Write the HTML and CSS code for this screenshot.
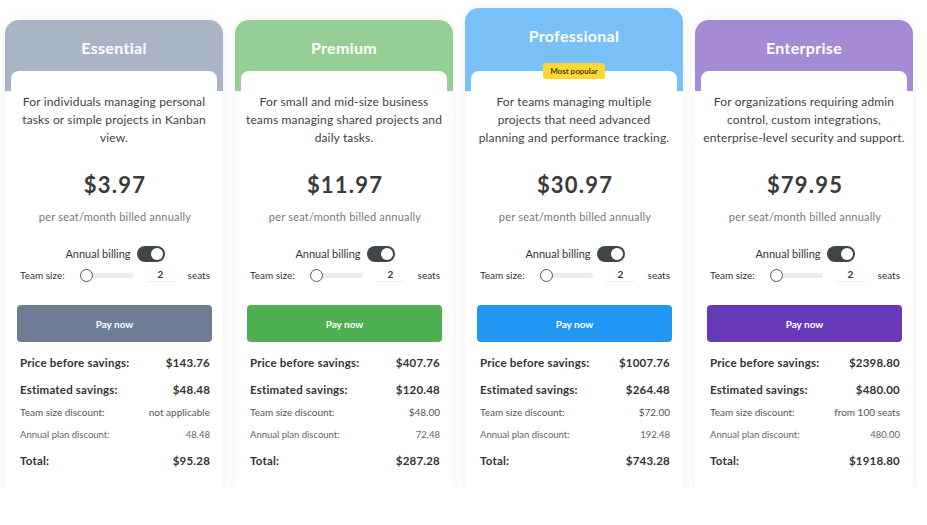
FILE: index.html
```html
<!DOCTYPE html>
<html lang="en">
<head>
<meta charset="utf-8">
<title>Pricing</title>
<link rel="stylesheet" href="styles.css">
</head>
<body>
<main class="pricing">
  <section class="plan plan--essential">
    <header class="plan-head">
      <h2 class="plan-name">Essential</h2>
      <div class="plan-tab"></div>
    </header>
    <div class="plan-body">
      <p class="plan-desc">For individuals managing personal tasks or simple projects in Kanban view.</p>
      <div class="plan-price">$3.97</div>
      <div class="plan-unit">per seat/month billed annually</div>
      <div class="billing">Annual billing <span class="toggle"><span class="knob"></span></span></div>
      <div class="team">
        <span class="team-label">Team size:</span>
        <span class="slider"><span class="thumb"></span></span>
        <span class="seat-input">2</span>
        <span class="team-unit">seats</span>
      </div>
      <button class="pay">Pay now</button>
      <div class="summary">
        <div class="row row--major"><span>Price before savings:</span><span>$143.76</span></div>
        <div class="row row--major"><span>Estimated savings:</span><span>$48.48</span></div>
        <div class="row row--minor"><span>Team size discount:</span><span>not applicable</span></div>
        <div class="row row--minor row--annual"><span>Annual plan discount:</span><span>48.48</span></div>
        <div class="row row--major row--total"><span>Total:</span><span>$95.28</span></div>
      </div>
    </div>
  </section>

  <section class="plan plan--premium">
    <header class="plan-head">
      <h2 class="plan-name">Premium</h2>
      <div class="plan-tab"></div>
    </header>
    <div class="plan-body">
      <p class="plan-desc">For small and mid-size business teams managing shared projects and daily tasks.</p>
      <div class="plan-price">$11.97</div>
      <div class="plan-unit">per seat/month billed annually</div>
      <div class="billing">Annual billing <span class="toggle"><span class="knob"></span></span></div>
      <div class="team">
        <span class="team-label">Team size:</span>
        <span class="slider"><span class="thumb"></span></span>
        <span class="seat-input">2</span>
        <span class="team-unit">seats</span>
      </div>
      <button class="pay">Pay now</button>
      <div class="summary">
        <div class="row row--major"><span>Price before savings:</span><span>$407.76</span></div>
        <div class="row row--major"><span>Estimated savings:</span><span>$120.48</span></div>
        <div class="row row--minor"><span>Team size discount:</span><span>$48.00</span></div>
        <div class="row row--minor row--annual"><span>Annual plan discount:</span><span>72.48</span></div>
        <div class="row row--major row--total"><span>Total:</span><span>$287.28</span></div>
      </div>
    </div>
  </section>

  <section class="plan plan--professional plan--featured">
    <header class="plan-head">
      <h2 class="plan-name">Professional</h2>
      <div class="plan-tab"><span class="badge">Most popular</span></div>
    </header>
    <div class="plan-body">
      <p class="plan-desc">For teams managing multiple<br>projects that need advanced<br>planning and performance tracking.</p>
      <div class="plan-price">$30.97</div>
      <div class="plan-unit">per seat/month billed annually</div>
      <div class="billing">Annual billing <span class="toggle"><span class="knob"></span></span></div>
      <div class="team">
        <span class="team-label">Team size:</span>
        <span class="slider"><span class="thumb"></span></span>
        <span class="seat-input">2</span>
        <span class="team-unit">seats</span>
      </div>
      <button class="pay">Pay now</button>
      <div class="summary">
        <div class="row row--major"><span>Price before savings:</span><span>$1007.76</span></div>
        <div class="row row--major"><span>Estimated savings:</span><span>$264.48</span></div>
        <div class="row row--minor"><span>Team size discount:</span><span>$72.00</span></div>
        <div class="row row--minor row--annual"><span>Annual plan discount:</span><span>192.48</span></div>
        <div class="row row--major row--total"><span>Total:</span><span>$743.28</span></div>
      </div>
    </div>
  </section>

  <section class="plan plan--enterprise">
    <header class="plan-head">
      <h2 class="plan-name">Enterprise</h2>
      <div class="plan-tab"></div>
    </header>
    <div class="plan-body">
      <p class="plan-desc">For organizations requiring admin control, custom integrations, enterprise-level security and support.</p>
      <div class="plan-price">$79.95</div>
      <div class="plan-unit">per seat/month billed annually</div>
      <div class="billing">Annual billing <span class="toggle"><span class="knob"></span></span></div>
      <div class="team">
        <span class="team-label">Team size:</span>
        <span class="slider"><span class="thumb"></span></span>
        <span class="seat-input">2</span>
        <span class="team-unit">seats</span>
      </div>
      <button class="pay">Pay now</button>
      <div class="summary">
        <div class="row row--major"><span>Price before savings:</span><span>$2398.80</span></div>
        <div class="row row--major"><span>Estimated savings:</span><span>$480.00</span></div>
        <div class="row row--minor"><span>Team size discount:</span><span>from 100 seats</span></div>
        <div class="row row--minor row--annual"><span>Annual plan discount:</span><span>480.00</span></div>
        <div class="row row--major row--total"><span>Total:</span><span>$1918.80</span></div>
      </div>
    </div>
  </section>
</main>
</body>
</html>
```

FILE: styles.css
```css
* { box-sizing: border-box; }

body {
  margin: 0;
  background: #fff;
  font-family: Lato, "Open Sans", sans-serif;
  color: #333;
}

/* plan columns, cut off flat at the bottom */
.pricing {
  display: grid;
  grid-template-columns: repeat(4, 218px);
  column-gap: 12px;
  align-items: start;
  height: 487px;
  overflow: hidden;
  padding: 8px 0 0 5px;
}

.plan {
  margin-top: 12px;
  background: #fff;
  border-radius: 14px 14px 0 0;
  box-shadow: 0 0 10px rgba(0, 0, 0, 0.07);
  min-height: 520px;
}

.plan--featured { margin-top: 0; }

.plan--essential { --tint: #a9b4c5; --accent: #6e7c96; }
.plan--premium { --tint: #96cf95; --accent: #4caf50; }
.plan--professional { --tint: #79c0f8; --accent: #2196f3; }
.plan--enterprise { --tint: #a58ad4; --accent: #673ab7; }

.plan-head {
  background: var(--tint);
  border-radius: 14px 14px 0 0;
  padding: 0 6px;
}

.plan-name {
  margin: 0;
  padding: 18px 0 13px;
  font-size: 16px;
  line-height: 20px;
  font-weight: 700;
  color: #fff;
  text-align: center;
  letter-spacing: 0.3px;
}

.plan--featured .plan-name { padding-bottom: 25px; }

.plan-tab {
  position: relative;
  height: 20px;
  background: #fff;
  border-radius: 8px 8px 0 0;
}

.badge {
  position: absolute;
  left: 50%;
  top: -8px;
  transform: translateX(-50%);
  width: 62px;
  height: 16px;
  line-height: 16px;
  background: #fdd835;
  border-radius: 3px;
  color: #4a4200;
  font-size: 8px;
  font-weight: 700;
  text-align: center;
  white-space: nowrap;
}

.plan-body {
  padding: 2px 13px 30px 15px;
}

.plan-desc {
  margin: 0 -6px 0 -8px;
  font-size: 12px;
  line-height: 18px;
  color: #3f3f3f;
  text-align: center;
  letter-spacing: 0.15px;
}

.plan-price {
  margin-top: 24px;
  font-size: 22px;
  line-height: 28px;
  font-weight: 700;
  color: #3a3a3a;
  text-align: center;
  letter-spacing: 1.2px;
}

.plan-unit {
  margin-top: 10px;
  font-size: 11px;
  line-height: 16px;
  color: #777;
  text-align: center;
  letter-spacing: 0.2px;
}

.billing {
  margin-top: 21px;
  display: flex;
  justify-content: center;
  align-items: center;
  gap: 6px;
  font-size: 11px;
  line-height: 16px;
  color: #333;
}

.toggle {
  position: relative;
  width: 28px;
  height: 16px;
  border-radius: 8px;
  background: #3e464a;
}

.knob {
  position: absolute;
  right: 2px;
  top: 2px;
  width: 12px;
  height: 12px;
  border-radius: 50%;
  background: #fff;
}

.team {
  margin-top: 6px;
  display: flex;
  align-items: center;
  height: 14px;
  font-size: 10px;
  color: #333;
}

.team-label { width: 60px; }

.slider {
  position: relative;
  width: 53px;
  height: 5px;
  border-radius: 3px;
  background: #ececec;
}

.thumb {
  position: absolute;
  left: 0;
  top: -4px;
  width: 13px;
  height: 13px;
  border-radius: 50%;
  border: 1.5px solid #555;
  background: #fff;
}

.seat-input {
  margin-left: 13px;
  width: 29px;
  text-align: center;
  font-weight: 700;
  border-bottom: 1px solid #eee;
  line-height: 13px;
}

.team-unit { margin-left: auto; }

.pay {
  display: block;
  margin: 23px 0 0 -3px;
  width: calc(100% + 5px);
  height: 37px;
  border: 0;
  border-radius: 4px;
  background: var(--accent);
  color: #fff;
  font-family: inherit;
  font-size: 10px;
  font-weight: 700;
}

.summary { padding-top: 4px; }

.row {
  display: flex;
  justify-content: space-between;
  margin-top: 7px;
}

.row--major {
  font-size: 11.5px;
  line-height: 20px;
  font-weight: 700;
  color: #333;
  letter-spacing: 0.2px;
}

.row--minor {
  margin-top: 4px;
  font-size: 10px;
  line-height: 16px;
  color: #555;
}

.row--annual {
  margin-top: 7px;
  font-size: 9.5px;
  color: #666;
}

.row--total { margin-top: 8px; }
```
